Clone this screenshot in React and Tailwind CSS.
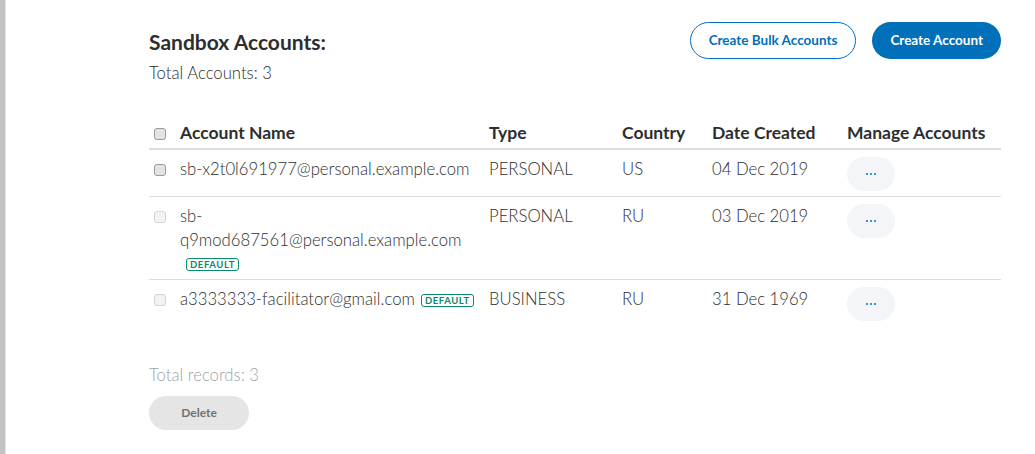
import React from 'react';

const accounts = [
  { email: 'sb-x2t0l691977@personal.example.com', type: 'PERSONAL', country: 'US', date: '04 Dec 2019', isDefault: false, badgeInline: false, disabled: false, breakName: false },
  { email: 'sb-q9mod687561@personal.example.com', type: 'PERSONAL', country: 'RU', date: '03 Dec 2019', isDefault: true, badgeInline: false, disabled: true, breakName: true },
  { email: 'a3333333-facilitator@gmail.com', type: 'BUSINESS', country: 'RU', date: '31 Dec 1969', isDefault: true, badgeInline: true, disabled: true, breakName: false },
];

const cols = 'grid grid-cols-[31px_309px_133px_90px_135px_154px]';

const Checkbox = ({ disabled }) => (
  <span
    className={`block w-[12px] h-[12px] rounded-[3px] border ${
      disabled ? 'border-[#d4d4d4] bg-[#f3f3f3]' : 'border-[#9a9a9a] bg-[#e4e4e4]'
    }`}
  />
);

const DefaultBadge = () => (
  <span className="inline-block align-middle ml-[6px] px-[3px] border border-[#0a8a6a] rounded-[3px] text-[#0a8a6a] text-[9.5px] leading-[11px] font-bold tracking-[0.6px]">
    DEFAULT
  </span>
);

const App = () => {
  return (
    <div className="flex min-h-[454px] bg-white font-['Lato',sans-serif] text-[#2c2e2f]">
      {/* left rail */}
      <div className="w-[6px] bg-[#c2c2c2] border-r border-[#e6e6e6] shrink-0"></div>

      <div className="pl-[143px] pt-[22px] w-[995px]">
        {/* header */}
        <div className="flex justify-between">
          <div>
            <h1 className="mt-[8px] text-[21px] leading-[24px] font-bold text-[#2c2e2f]">Sandbox Accounts:</h1>
            <p className="mt-[9px] text-[16.7px] leading-[20px] font-light">Total Accounts: 3</p>
          </div>
          <div className="flex gap-[16px]">
            <button className="h-[37px] px-[18px] rounded-full border border-[#0070ba] text-[#0070ba] text-[13.5px] font-bold">
              Create Bulk Accounts
            </button>
            <button className="h-[37px] px-[18px] rounded-full bg-[#0070ba] text-white text-[13.5px] font-bold">
              Create Account
            </button>
          </div>
        </div>

        {/* table */}
        <div className="mt-[36px] w-[852px]">
          <div className={`${cols} items-center h-[31px] border-b-2 border-[#dedede] text-[17.5px] font-bold`}>
            <div className="pl-[5px]"><Checkbox /></div>
            <div>Account Name</div>
            <div>Type</div>
            <div>Country</div>
            <div>Date Created</div>
            <div>Manage Accounts</div>
          </div>

          {accounts.map((a, i) => (
            <div
              key={a.email}
              className={`${cols} pt-[7px] pb-[5px] text-[16.7px] leading-[24px] font-light ${
                i < accounts.length - 1 ? 'border-b border-[#dedede]' : ''
              }`}
            >
              <div className="pl-[5px] pt-[7px]"><Checkbox disabled={a.disabled} /></div>
              <div>
                {a.breakName ? (
                  <>
                    <div>sb-</div>
                    <div>q9mod687561@personal.example.com</div>
                    <div className="leading-[22px]"><DefaultBadge /></div>
                  </>
                ) : (
                  <span>
                    {a.email}
                    {a.isDefault && a.badgeInline && <DefaultBadge />}
                  </span>
                )}
              </div>
              <div>{a.type}</div>
              <div>{a.country}</div>
              <div>{a.date}</div>
              <div>
                <button className="w-[48px] h-[34px] rounded-full bg-[#f3f5f9] flex items-center justify-center gap-[1.5px]">
                  <span className="w-[2.5px] h-[2.5px] bg-[#0070ba] rounded-full"></span>
                  <span className="w-[2.5px] h-[2.5px] bg-[#0070ba] rounded-full"></span>
                  <span className="w-[2.5px] h-[2.5px] bg-[#0070ba] rounded-full"></span>
                </button>
              </div>
            </div>
          ))}
        </div>

        <p className="mt-[39px] text-[16.7px] leading-[20px] font-light text-[#9da3a6]">Total records: 3</p>
        <button className="mt-[11px] w-[100px] h-[34px] rounded-full bg-[#e5e5e5] text-[#6c7378] text-[12px] font-bold">
          Delete
        </button>
      </div>
    </div>
  );
};

export default App;
